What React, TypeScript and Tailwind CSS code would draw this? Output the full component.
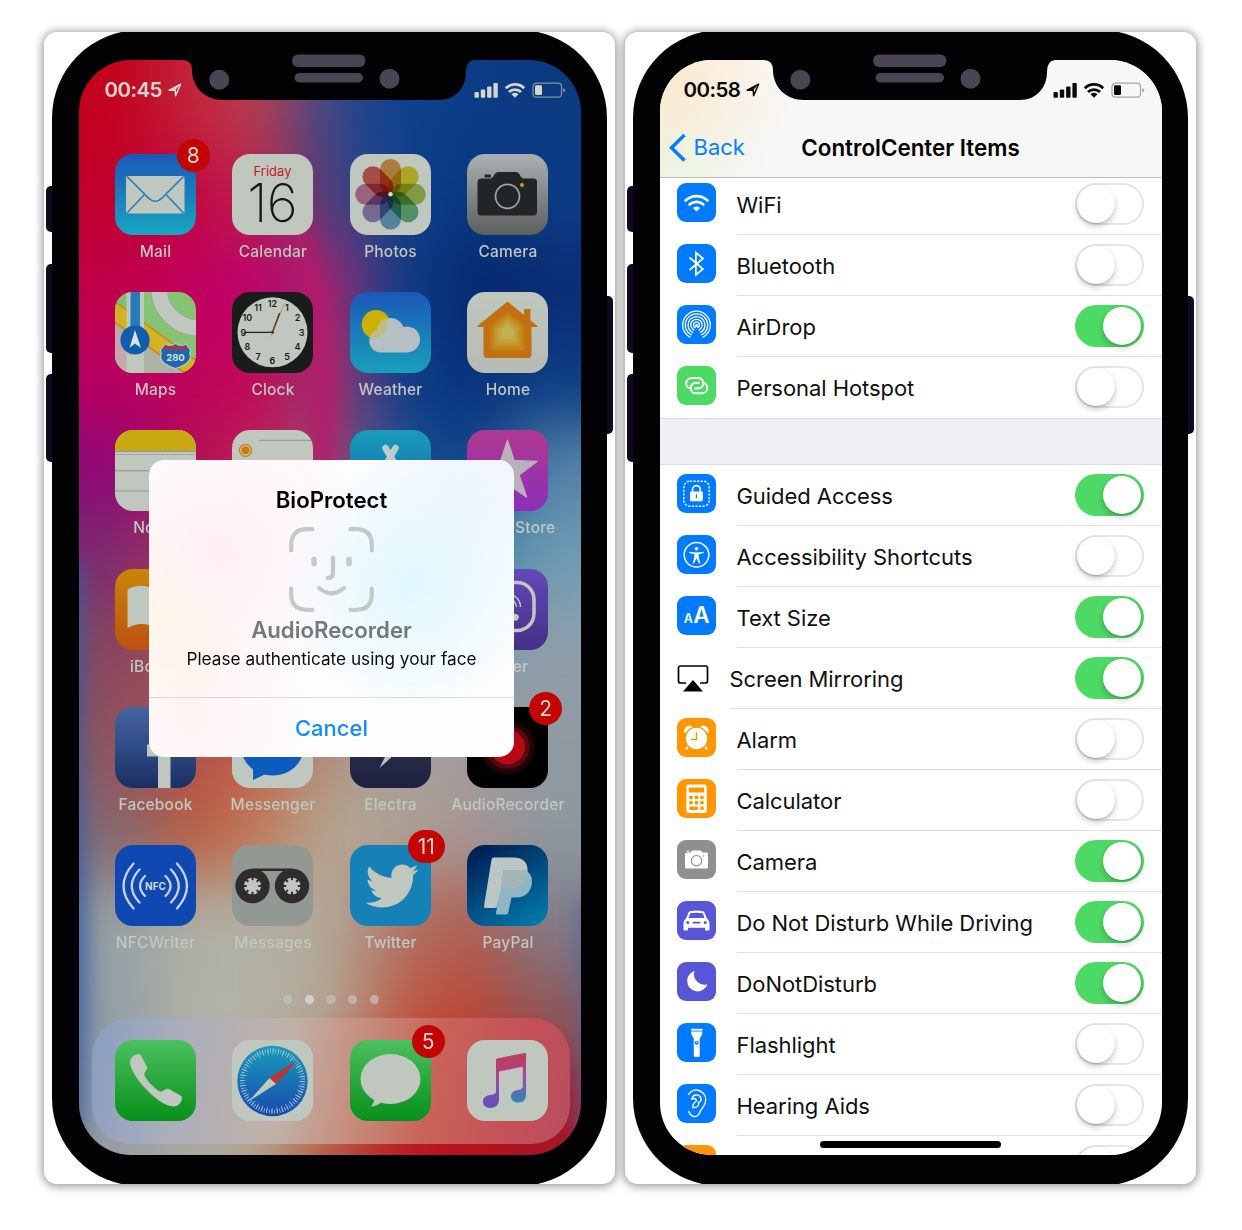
import React from "react";
import { FaTwitter } from "react-icons/fa";

type Child = { children?: React.ReactNode };

const W = "#bfc7be";

/* ---------- wallpaper: a coarse colour mesh, softened ---------- */
const MESH: string[][] = [
  ["#c4001c", "#c2223a", "#ba4050", "#35488a", "#0d418e", "#0b3c86", "#0c3a80"],
  ["#c0002c", "#c00440", "#bd2450", "#45437f", "#0d418e", "#08367c", "#0b3c86"],
  ["#c00048", "#c00060", "#be006c", "#a02a70", "#0b4088", "#06266c", "#0a2c74"],
  ["#b80060", "#c0005a", "#c00a58", "#9c3a72", "#0a408a", "#07307a", "#0b3c82"],
  ["#8c0878", "#b01058", "#c02050", "#8a5078", "#205090", "#0c4088", "#5684aa"],
  ["#7a2c70", "#b03055", "#c05060", "#a06080", "#5080a8", "#4080a8", "#6f9db4"],
  ["#86485f", "#a84858", "#c06050", "#a08080", "#8098a8", "#8098a8", "#929faa"],
  ["#8a5560", "#b54c48", "#c06048", "#b09080", "#a8a09c", "#a09c9c", "#8f99a2"],
  ["#806874", "#b85c40", "#c07a58", "#b4a894", "#aca094", "#a89494", "#8c98a0"],
  ["#94a0a4", "#aeb0a4", "#b2b2a6", "#b2a898", "#ae7466", "#b05c50", "#7e7e8c"],
  ["#8e9ca8", "#b2b2a6", "#b2b2a6", "#b4a694", "#be5a44", "#be4634", "#8a585c"],
  ["#9098a4", "#aaaca8", "#b4ac98", "#b86c50", "#b82024", "#b8101c", "#a01828"],
  ["#9ca0a0", "#aaa89e", "#b4a088", "#b84830", "#b8141c", "#b8101c", "#a81424"],
];

function Wallpaper() {
  return (
    <svg className="absolute inset-0 size-full" viewBox="0 0 502 1095" preserveAspectRatio="none">
      <defs>
        <filter id="soft" x="-20%" y="-20%" width="140%" height="140%" colorInterpolationFilters="sRGB">
          <feGaussianBlur stdDeviation="33" />
        </filter>
        <filter id="soft2" x="-50%" y="-50%" width="200%" height="200%" colorInterpolationFilters="sRGB">
          <feGaussianBlur stdDeviation="10" />
        </filter>
      </defs>
      <g filter="url(#soft)">
        {MESH.map((row, r) =>
          row.map((c, i) => (
            <rect
              key={`${r}-${i}`}
              x={i === 0 ? -120 : i * 71.7}
              y={r === 0 ? -120 : r * 91}
              width={i === 0 || i === 6 ? 193 : 72.7}
              height={r === 0 ? 212 : 92}
              fill={c}
            />
          ))
        )}
      </g>
      <g filter="url(#soft2)">
        <path d="M190 110C225 140 245 200 255 270C262 320 262 370 256 430L225 430C235 330 225 220 190 110Z" fill="#b81868" opacity="0.75" />
        <path d="M-24 500H2C8 600 0 680 6 780C12 880 8 1000 2 1100H-24Z" fill="#3a5c9c" opacity="0.85" />
        <path d="M497 840H520V1080H497Z" fill="#5a6490" opacity="0.7" />
      </g>
    </svg>
  );
}

/* ---------- phone shell ---------- */
function Phone({ children }: Child) {
  return (
    <div className="relative h-[1152px] w-[571px] overflow-visible rounded-[13px] bg-white shadow-[0_1px_8px_2px_rgba(0,0,0,0.38)]">
      <div className="absolute left-[2px] top-[154px] h-[46px] w-3 rounded-[5px] bg-[#120820]" />
      <div className="absolute left-[2px] top-[232px] h-[89px] w-3 rounded-[5px] bg-[#120820]" />
      <div className="absolute left-[2px] top-[342px] h-[88px] w-3 rounded-[5px] bg-[#120820]" />
      <div className="absolute right-[2px] top-[264px] h-[138px] w-3 rounded-[5px] bg-[#120820]" />
      <div className="absolute inset-0 overflow-hidden rounded-[13px]">
        <div className="relative -mt-[2px] ml-[8px] h-[1156px] w-[555px] rounded-[88px] bg-[#020204] pl-[26.5px] pt-[30px]">
          <div className="relative flex h-[1095px] w-[502px] flex-col overflow-hidden rounded-[52px]">{children}</div>
          <svg className="absolute left-[26.5px] top-0 z-20 h-[72px] w-[502px]" viewBox="0 0 502 72">
            <path d="M100 30H104Q113 30.500 113 40C113 57 126 70 144 70H360C376 70 387 58 387 42Q387 30.500 395 30H400V20H100Z" fill="#020204" />
            <rect x="213" y="24.500" width="73.500" height="12.500" rx="6.200" fill="#4b4453" />
            <rect x="215.500" y="43" width="68.500" height="9.500" rx="4.700" fill="#4b4453" />
            <circle cx="140.300" cy="49.700" r="10" fill="#4b4453" />
            <circle cx="310.500" cy="48.700" r="10" fill="#4b4453" />
          </svg>
        </div>
      </div>
    </div>
  );
}

function StatusBar({ time, color, faint }: { time: string; color: string; faint: string }) {
  return (
    <div className="relative flex h-[60px] shrink-0 items-center justify-between" style={{ color }}>
      <div className="flex items-center">
        <span className="text-[20.500px] font-semibold leading-5 tracking-[-0.550px]">{time}</span>
        <svg className="ml-[6px] size-[14px]" viewBox="0 0 14 14">
          <path d="M1.200 7.200L12.600 1.200L7.600 12.600L7.200 7Z" fill="none" stroke={color} strokeWidth="1.500" strokeLinejoin="round" />
          <path d="M1.200 7.200L12.600 1.200L7.200 7Z" fill={color} />
        </svg>
      </div>
      <svg className="h-[17px] w-[92px]" viewBox="0 0 92 17">
        <g fill={color}>
          <rect x="0.500" y="10" width="4.400" height="5.800" rx="1" />
          <rect x="6.800" y="7.500" width="4.400" height="8.300" rx="1" />
          <rect x="13.100" y="4.500" width="4.400" height="11.300" rx="1" />
          <rect x="19.400" y="1" width="4.400" height="14.800" rx="1" />
          <path d="M41 15.800L37.500 12.300A5 5 0 0 1 44.500 12.300Z" />
        </g>
        <g fill="none" stroke={color} strokeWidth="2.800">
          <path d="M31.800 6.200A13.200 13.200 0 0 1 50.200 6.200" />
          <path d="M35 10A8.700 8.700 0 0 1 47 10" />
        </g>
        <rect x="59" y="1.200" width="28.500" height="14" rx="3.500" fill="none" stroke={faint} strokeWidth="1.200" />
        <rect x="61" y="3.300" width="7" height="9.800" rx="1.300" fill={color} />
        <path d="M89.200 6v4.600q2-1 2-2.300t-2-2.300Z" fill={faint} />
      </svg>
    </div>
  );
}

/* ---------- home screen icons (81 x 81 artwork) ---------- */
function Art({ id, from, to, diag, children }: Child & { id: string; from: string; to: string; diag?: boolean }) {
  return (
    <svg className="size-[81px] overflow-hidden rounded-[18px]" viewBox="0 0 81 81">
      <defs>
        <linearGradient id={id} x1={diag ? "0.2" : "0"} y1="0" x2={diag ? "0.8" : "0"} y2="1">
          <stop offset="0" stopColor={from} />
          <stop offset="1" stopColor={to} />
        </linearGradient>
      </defs>
      <rect width="81" height="81" fill={`url(#${id})`} />
      {children}
    </svg>
  );
}

const MailIcon = () => (
  <Art id="mail" from="#1b58b8" to="#18a6c0">
    <rect x="11" y="22" width="58.500" height="37.500" rx="1.500" fill={W} />
    <g fill="none" stroke="#2c80c2" strokeWidth="1.700">
      <path d="M12 22.500L33.500 44.200Q40.300 50.500 47 44.200L68.500 22.500" />
      <path d="M12 59L29.500 40.500M68.500 59L51 40.500" />
    </g>
  </Art>
);

const CalendarIcon = () => (
  <Art id="cal" from={W} to={W}>
    <text x="40.500" y="21.800" textAnchor="middle" fontSize="13" fill="#c21c20">Friday</text>
    <text x="40" y="67.700" textAnchor="middle" fontSize="53" fontWeight="200" letterSpacing="-0.800" fill="#15181a">16</text>
  </Art>
);

const PETALS = ["#dc8726", "#d8cc00", "#98b830", "#4aa868", "#4c90c4", "#8268b0", "#bc6094", "#d23c34"];
const PhotosIcon = () => (
  <Art id="photos" from={W} to={W}>
    <g style={{ isolation: "isolate" }}>
      <circle cx="40.500" cy="40.300" r="36" fill={W} />
      {PETALS.map((c, i) => (
        <rect key={c} x="30" y="5" width="21" height="35" rx="10.500" fill={c} opacity="0.8" transform={`rotate(${i * 45} 40.500 40.300)`} className="mix-blend-multiply" />
      ))}
      <circle cx="40.500" cy="40.300" r="2.200" fill="#d8dccc" />
    </g>
  </Art>
);

const CameraIcon = () => (
  <Art id="cam" from="#abb0b3" to="#5c5f5c">
    <path d="M14.500 24.500H24Q26 24 27.500 20.500Q28.500 18 31 18H49Q51.500 18 52.500 20.500Q54 24 56 24.500H66.500Q70 24.500 70 28V58Q70 61.500 66.500 61.500H14.500Q10.500 61.500 10.500 58V28Q10.500 24.500 14.500 24.500Z" fill="#222527" />
    <rect x="17.500" y="20.600" width="6.500" height="2.800" rx="1.200" fill="#222527" />
    <circle cx="40.500" cy="42.300" r="12" fill="#222527" stroke="#9ea3a3" strokeWidth="1.700" />
    <circle cx="55" cy="31" r="1.900" fill="#d0a810" />
  </Art>
);

const MapsIcon = () => (
  <Art id="maps" from="#86c474" to="#86c474">
    <path d="M0 0H13V81H0Z" fill="#a8b098" />
    <path d="M0 0H12V22L0 12Z" fill="#86bc74" />
    <path d="M0 34L12 42V81H0Z" fill="#c6a8ac" />
    <path d="M29 47L72 81H29Z" fill="#adb2a6" />
    <circle cx="84" cy="-4" r="40" fill="none" stroke="#98a890" strokeWidth="17.500" />
    <circle cx="84" cy="-4" r="40" fill="none" stroke={W} strokeWidth="15.500" />
    <path d="M-4 17L84 81" stroke="#c08420" strokeWidth="18" />
    <path d="M-4 17L84 81" stroke="#d2b422" strokeWidth="15.500" />
    <rect x="11.500" y="0" width="17.500" height="81" fill={W} />
    <rect x="15.500" y="0" width="9.500" height="50" fill="#267cb8" />
    <circle cx="20" cy="48" r="14.600" fill="#0f5dae" />
    <path d="M20 38L26 56L20 51.500L14.500 56Z" fill="#dbe2dc" />
    <path d="M50 52Q55 55 60.500 51.500Q66 55 71 52L75.500 58Q74 61 75.500 65Q75 72 60.500 76.500Q46 72 45.500 65Q47 61 45.500 58Z" fill="#1c66b2" stroke="#bfc7be" strokeWidth="1.200" />
    <path d="M51 53.500Q56 56 60.500 53.500Q65 56 70 53.500L73 57.500H48Z" fill="#c03038" />
    <text x="60.500" y="69" textAnchor="middle" fontSize="9.500" fontWeight="700" fill="#dbe2dc">280</text>
  </Art>
);

const ClockIcon = () => (
  <Art id="clock" from="#1a1c1c" to="#1a1c1c">
    <circle cx="40.500" cy="40.300" r="35" fill={W} />
    {[1, 2, 3, 4, 5, 6, 7, 8, 9, 10, 11, 12].map((n) => (
      <text
        key={n}
        x={40.5 + 29 * Math.sin((n * Math.PI) / 6)}
        y={43.6 - 28.5 * Math.cos((n * Math.PI) / 6)}
        textAnchor="middle"
        fontSize="9"
        fontWeight="600"
        fill="#1a1c1c"
      >
        {n}
      </text>
    ))}
    <path d="M40.500 40.300H12.500" stroke="#202222" strokeWidth="1.300" />
    <path d="M40.500 40.300L47.800 21" stroke="#202222" strokeWidth="1.600" />
    <path d="M39 44.500L52.500 11" stroke="#c08a40" strokeWidth="0.700" />
    <circle cx="40.500" cy="40.300" r="1.600" fill="#5a4020" />
  </Art>
);

const WeatherIcon = () => (
  <Art id="weather" from="#1b58b8" to="#17a0ba">
    <circle cx="26" cy="32.300" r="14.300" fill="#cbb202" />
    <path d="M30 60.500A11.300 11.300 0 0 1 27 38.500A13.700 13.700 0 0 1 53.500 35A13 13 0 1 1 57 60.500Z" fill="#b4c0c4" />
    <path d="M27 38.500A13.700 13.700 0 0 1 36.500 26A14.300 14.300 0 0 1 24.500 46.300Q21 46 19.500 47Q20.500 40 27 38.500Z" fill="#bfbc88" />
  </Art>
);

const HOUSE = [
  ["#c27412", 1],
  ["#c48418", 0.86],
  ["#c59226", 0.7],
  ["#c4a038", 0.54],
  ["#c0b052", 0.37],
] as const;
const HomeIcon = () => (
  <Art id="home" from={W} to="#b8bab4">
    <path d="M40.500 9.500L57 23V18Q57 17 58 17H62.500Q63.500 17 63.500 18V28.500L70.500 34Q71 35 70 35H64.500V62Q64.500 66 61 66H20Q16.500 66 16.500 62V35H11Q10 35 10.500 34Z" fill="#c26e12" />
    {HOUSE.map(([c, s]) => (
      <path key={c} d="M0 -23L19 -8V18Q19 20 17 20H-17Q-19 20 -19 18V-8Z" fill={c} transform={`translate(40.500 ${41 - (1 - s) * 1}) scale(${s})`} />
    ))}
  </Art>
);

const NotesIcon = () => (
  <Art id="notes" from={W} to={W}>
    <rect width="81" height="20.500" fill="#c8aa10" />
    <rect y="20.500" width="81" height="1.500" fill="#a09868" />
    <path d="M0 24.500H81" stroke="#8a8f88" strokeWidth="1" strokeDasharray="1.300 1.300" />
    <path d="M0 40.800H81M0 61H81" stroke="#8f958f" strokeWidth="1" />
  </Art>
);

const RemindersIcon = () => (
  <Art id="rem" from={W} to={W}>
    <path d="M27 10.300H81M27 31H81" stroke="#8f958f" strokeWidth="1" />
    <circle cx="13.500" cy="20.300" r="6" fill="none" stroke="#c88418" strokeWidth="1.300" />
    <circle cx="13.500" cy="20.300" r="4" fill="#d07c00" />
  </Art>
);

const AppStoreIcon = () => (
  <Art id="store" from="#189cb8" to="#1860b8">
    <path d="M35.500 18L46 36M45.500 18L30 45" stroke="#b8ccd0" strokeWidth="6.500" strokeLinecap="round" />
  </Art>
);

const ITunesIcon = () => (
  <Art id="itunes" from="#b03890" to="#8a30b8">
    <path d="M40.500 10.500L47 30.500L70 31.500L52 45L59.500 67L40.500 54L21.500 67L29 45L11 31.500L34 30.500Z" fill="#b8b0ba" stroke="#b8b0ba" strokeWidth="1.500" strokeLinejoin="round" />
  </Art>
);

const IBooksIcon = () => (
  <Art id="ibooks" from="#c88608" to="#bc5010">
    <path d="M12.500 59V20.500Q26 13 40.500 21Q55 13 68.500 20.500V59Q54 51 40.500 59Q27 51 12.500 59Z" fill={W} />
  </Art>
);

const ViberIcon = () => (
  <Art id="viber" from="#6448b8" to="#443088">
    <rect x="14" y="13.500" width="53" height="48" rx="17" fill="none" stroke={W} strokeWidth="3.500" />
    <g fill="none" stroke={W} strokeWidth="1.500">
      <path d="M41 25A13 13 0 0 1 53.500 38M41 29.500A9 9 0 0 1 49.500 38M41 34A4.500 4.500 0 0 1 45.500 38" />
    </g>
    <path d="M44 48Q48 42 52 47L51 51Q47 53 44 50Z" fill={W} />
  </Art>
);

const FacebookIcon = () => (
  <Art id="fb" from="#4464a4" to="#1a3064">
    <path d="M43 81V49.500H32V37.500H43V30Q43 16 57 16H66V27H60Q55.500 27 55.500 32V37.500H66L64.500 49.500H55.500V81Z" fill={W} />
  </Art>
);

const MessengerIcon = () => (
  <Art id="msgr" from={W} to={W}>
    <ellipse cx="40.500" cy="41" rx="31" ry="27.500" fill="#0c5cc0" />
    <path d="M21 58V73L38 65Z" fill="#0c5cc0" />
  </Art>
);

const ElectraIcon = () => (
  <Art id="electra" from="#343c54" to="#1e2040">
    <path d="M50 18L26 46H37L29.500 61L55 38H43Z" fill={W} />
  </Art>
);

const RecorderIcon = () => (
  <Art id="recorder" from="#000000" to="#000000">
    <circle cx="40.500" cy="40" r="27" fill="#240206" />
    <circle cx="40.500" cy="40" r="22" fill="#540a10" />
    <circle cx="40.500" cy="40" r="17.500" fill="#b80814" />
  </Art>
);

const NfcIcon = () => (
  <Art id="nfc" from="#1048b2" to="#1048b2">
    <g fill="none" stroke="#c8d0d8" strokeWidth="2.300" strokeLinecap="round">
      <path d="M18.500 18.500Q-1.500 41 18.500 63.500M24.500 24.500Q9 41 24.500 57.500M30 31Q20 41 30 51" />
      <path d="M62 18.500Q82 41 62 63.500M56 24.500Q71.500 41 56 57.500M50.500 31Q60.500 41 50.500 51" />
    </g>
    <text x="40.500" y="44.500" textAnchor="middle" fontSize="10" fontWeight="700" fill="#d0d8dc">NFC</text>
  </Art>
);

const TEETH = [0, 45, 90, 135, 180, 225, 270, 315];
const TapeIcon = () => (
  <Art id="tape" from="#929892" to="#929892">
    <path d="M20.500 24.700H60" stroke="#2e2c2e" strokeWidth="2.400" />
    {[20.5, 60].map((x) => (
      <g key={x}>
        <circle cx={x} cy="41" r="17.200" fill="#2e2c2e" />
        <circle cx={x} cy="41" r="8.600" fill={W} />
        {TEETH.map((a) => (
          <rect key={a} x={x - 1} y="32" width="2" height="3.200" fill="#2e2c2e" transform={`rotate(${a} ${x} 41)`} />
        ))}
      </g>
    ))}
  </Art>
);

const TwitterIcon = () => (
  <Art id="tw" from="#1581b6" to="#1581b6">
    <FaTwitter x="15.500" y="14.500" size={53} color={W} />
  </Art>
);

const PayPalIcon = () => (
  <Art id="pp" from="#001e56" to="#0078a8" diag>
    <path d="M36 25H56Q66 27 65 38Q63 52 49 52.500H44.500L41 68.500Q40.500 69.500 39 69.500H30Q28.500 69.500 29 68Z" fill="#8fb6c6" />
    <path d="M26.500 12.500H46Q61 12.500 60.500 26Q59 43 42 43H34L30 61.500Q29.500 63 28 63H18.500Q16.500 63 17 61L24.500 14.500Q25 12.500 26.500 12.500Z" fill="#bcc6c4" />
    <path d="M36 25H60.500Q59.500 43 42 43H33.500Z" fill="#a3b5b8" />
  </Art>
);

const PhoneIcon = () => (
  <Art id="phone" from="#4cc060" to="#06901a">
    <path d="M15 22C15 17 20 14.500 23.500 14Q25 14 26 15.500L32 27Q32.500 28.500 31.500 29.500L29.500 33Q29 34.500 29.500 35.500C33 42 39 48 44.500 51.300Q46 52 47.500 51L51 49Q52.500 48.300 54 49L65.500 55.500Q67.500 56.500 67 58.500C66 63 63 66.500 58.500 66.500C50 66.500 38 57 29 47C21 38 15 28 15 22Z" fill={W} />
  </Art>
);

const SafariIcon = () => (
  <div className="flex size-[81px] overflow-hidden rounded-[18px] bg-[#bfc7be]">
    <svg className="size-[81px]" viewBox="0 0 81 81">
      <defs>
        <linearGradient id="safari" x1="0" y1="0" x2="0" y2="1">
          <stop offset="0" stopColor="#189cb8" />
          <stop offset="1" stopColor="#1848b0" />
        </linearGradient>
      </defs>
      <circle cx="40.500" cy="41" r="35.200" fill="url(#safari)" />
      <circle cx="40.500" cy="41" r="30.500" fill="none" stroke="#a8c4cc" strokeWidth="4" strokeDasharray="0.800 1.862" />
      <circle cx="40.500" cy="41" r="29.500" fill="none" stroke="#a8c4cc" strokeWidth="6" strokeDasharray="0.800 4.350" />
      <path d="M66 20L44 44L37.500 38Z" fill="#c03430" />
      <path d="M16.500 61.500L44 44L37.500 38Z" fill={W} />
    </svg>
  </div>
);

const MessagesIcon = () => (
  <Art id="sms" from="#4cc060" to="#06901a">
    <ellipse cx="40.500" cy="39" rx="30" ry="25" fill={W} />
    <path d="M24.500 56Q25 63 20.500 66.500Q28 66 33 61Z" fill={W} />
  </Art>
);

const MusicIcon = () => (
  <div className="size-[81px] rounded-[18px] bg-[#bfc7be]">
    <svg className="size-[81px]" viewBox="0 0 81 81">
      <defs>
        <linearGradient id="note" x1="0.300" y1="0" x2="0.500" y2="1">
          <stop offset="0" stopColor="#c4384c" />
          <stop offset="0.300" stopColor="#b44078" />
          <stop offset="0.650" stopColor="#7850b4" />
          <stop offset="1" stopColor="#5a50c0" />
        </linearGradient>
        <linearGradient id="note2" x1="0" y1="0" x2="0" y2="1">
          <stop offset="0" stopColor="#c4384c" />
          <stop offset="0.400" stopColor="#a04c9c" />
          <stop offset="1" stopColor="#2c84bc" />
        </linearGradient>
      </defs>
      <path d="M29 20Q29 18.800 30.200 18.500L57.500 13Q59 12.700 59 14V26L32 31.500V60C32 65 28 68 23 68C18.500 68 16 65 16 61.500C16 57.500 19 55.500 23 55L26 54.500Q29 54 29 51Z" fill="url(#note)" />
      <path d="M55.800 14H59V55C59 60 55.500 62.500 51 62.500C47 62.500 44 60 44 56.500C44 52.500 47 50.500 51 50L53.500 49.500Q55.800 49 55.800 46Z" fill="url(#note2)" />
    </svg>
  </div>
);

function Badge({ n }: { n: string }) {
  return (
    <span
      className={`absolute right-[-14px] top-[-15px] flex h-[33px] items-center justify-center rounded-full bg-[#c40404] text-[21px] leading-none text-[#d8d8cc] ${
        n.length > 1 ? "w-[37px]" : "w-[33px]"
      }`}
    >
      {n}
    </span>
  );
}

type App = { name?: string; icon?: React.ReactNode; badge?: string };
const APPS: App[] = [
  { name: "Mail", icon: <MailIcon />, badge: "8" },
  { name: "Calendar", icon: <CalendarIcon /> },
  { name: "Photos", icon: <PhotosIcon /> },
  { name: "Camera", icon: <CameraIcon /> },
  { name: "Maps", icon: <MapsIcon /> },
  { name: "Clock", icon: <ClockIcon /> },
  { name: "Weather", icon: <WeatherIcon /> },
  { name: "Home", icon: <HomeIcon /> },
  { name: "Notes", icon: <NotesIcon /> },
  { icon: <RemindersIcon /> },
  { icon: <AppStoreIcon /> },
  { name: "iTunes Store", icon: <ITunesIcon /> },
  { name: "iBooks", icon: <IBooksIcon /> },
  {},
  {},
  { name: "Viber", icon: <ViberIcon /> },
  { name: "Facebook", icon: <FacebookIcon /> },
  { name: "Messenger", icon: <MessengerIcon /> },
  { name: "Electra", icon: <ElectraIcon /> },
  { name: "AudioRecorder", icon: <RecorderIcon />, badge: "2" },
  { name: "NFCWriter", icon: <NfcIcon /> },
  { name: "Messages", icon: <TapeIcon /> },
  { name: "Twitter", icon: <TwitterIcon />, badge: "11" },
  { name: "PayPal", icon: <PayPalIcon /> },
];
const DOCK: App[] = [
  { icon: <PhoneIcon /> },
  { icon: <SafariIcon /> },
  { icon: <MessagesIcon />, badge: "5" },
  { icon: <MusicIcon /> },
];

function AppCell({ app }: { app: App }) {
  return (
    <div className="flex flex-col items-center">
      <div className="relative size-[81px]">
        {app.icon}
        {app.badge && <Badge n={app.badge} />}
      </div>
      {app.name && (
        <span className="mt-[7px] whitespace-nowrap pl-[0.500px] text-[15.500px] font-medium leading-5 tracking-[0.200px] text-[#c2c8c0]">{app.name}</span>
      )}
    </div>
  );
}

function BioDialog() {
  return (
    <div className="absolute left-[70.500px] top-[399.500px] flex h-[297.500px] w-[365px] flex-col items-center rounded-[15px] bg-[#fdfdfd] bg-[radial-gradient(circle_at_72%_42%,rgba(222,247,255,0.95),transparent_42%),radial-gradient(circle_at_90%_6%,rgba(238,244,255,0.9),transparent_30%),radial-gradient(circle_at_20%_30%,rgba(255,238,246,0.9),transparent_42%),radial-gradient(circle_at_4%_50%,rgba(255,246,222,0.9),transparent_28%),radial-gradient(circle_at_12%_86%,rgba(255,242,242,0.9),transparent_30%)]">
      <h2 className="mt-[26px] text-[22.200px] font-semibold leading-7 text-black">BioProtect</h2>
      <svg className="mt-[13px] h-[85px] w-[85px]" viewBox="0 0 85 85" fill="none" stroke="#c3c9c7" strokeWidth="4.200" strokeLinecap="round">
        <path d="M2.200 23.500V18Q2.200 2.200 18 2.200H23.500M61.500 2.200H67Q82.800 2.200 82.800 18V23.500M82.800 61.500V67Q82.800 82.800 67 82.800H61.500M23.500 82.800H18Q2.200 82.800 2.200 67V61.500" />
        <path d="M25 32.500V36.500M60 32.500V36.500" strokeWidth="5.600" />
        <path d="M44 30.500V45.500Q44 51 38.500 51" />
        <path d="M30 61Q42.500 71.500 55 61" />
      </svg>
      <h3 className="mt-[4px] text-[22.200px] font-semibold leading-7 text-[#747a79]">AudioRecorder</h3>
      <p className="mt-[3px] whitespace-nowrap text-[17.200px] leading-6 text-[#0c0c0c]">Please authenticate using your face</p>
      <button className="mt-auto h-[60px] w-full border-t border-[#dfd8d8] pt-[2px] text-[22px] font-medium text-[#128cf4]">Cancel</button>
    </div>
  );
}

function HomeScreen() {
  return (
    <>
      <Wallpaper />
      <div className="pl-[26px] pr-[15px]">
        <StatusBar time="00:45" color="#d3d6cd" faint="#8094ac" />
      </div>
      <div className="relative mt-[33.500px] grid auto-rows-[138.400px] grid-cols-[repeat(4,117.500px)] pl-[18px]">
        {APPS.map((a, i) => (
          <AppCell key={i} app={a} />
        ))}
      </div>
      <div className="relative mt-[11px] flex justify-center gap-[12.400px] pl-[3px]">
        <i className="size-[9.200px] rounded-full bg-[#b9bdb5]" />
        <i className="size-[9.200px] rounded-full bg-[#cdd4ce]" />
        <i className="size-[9.200px] rounded-full bg-[#bcb8ac]" />
        <i className="size-[9.200px] rounded-full bg-[#bcb4a8]" />
        <i className="size-[9.200px] rounded-full bg-[#c4aca0]" />
      </div>
      <div className="relative ml-[13px] mr-[10.500px] mt-[13.500px] grid h-[126px] grid-cols-[repeat(4,117.500px)] rounded-[38px] bg-[linear-gradient(100deg,#889dc0_0%,#a9aebb_18%,#c0b2a8_40%,#c69080_54%,#c86458_70%,#c45058_88%,#b84e60_100%)] pl-[5px] pt-[22.500px]">
        {DOCK.map((a, i) => (
          <AppCell key={i} app={a} />
        ))}
      </div>
      <BioDialog />
    </>
  );
}

/* ---------- settings icons (39 x 39 artwork) ---------- */
const WifiGlyph = () => (
  <>
    <g fill="none" stroke="#fff" strokeWidth="2.600">
      <path d="M8.500 17.500A16 16 0 0 1 30.500 17.500M12.500 21.500A10.500 10.500 0 0 1 26.500 21.500" strokeLinecap="round" />
    </g>
    <path d="M19.500 28.500L15.800 25A5.300 5.300 0 0 1 23.200 25Z" fill="#fff" />
  </>
);
const BluetoothGlyph = () => <path d="M12.500 13.500L26 25L18.900 31V8.500L26 14.500L12.500 26" fill="none" stroke="#fff" strokeWidth="1.700" />;
const AirDropGlyph = () => (
  <>
    <g fill="none" stroke="#fff" strokeWidth="1.250">
      {[13.8, 11.2, 8.5, 5.7, 2.9].map((r) => (
        <circle key={r} cx="19.500" cy="20" r={r} />
      ))}
    </g>
    <path d="M19.500 21L29 39H10Z" fill="#007aff" />
    <circle cx="19.500" cy="20.500" r="1.500" fill="#fff" />
  </>
);
const HotspotGlyph = () => (
  <g fill="none" stroke="#fff" strokeWidth="1.900" strokeLinecap="round">
    <path d="M13.500 22.500A5.300 5.300 0 0 1 14.500 12H21.500A5.300 5.300 0 0 1 22.500 22.300L18 22.500" />
    <path d="M26 16.800A5.300 5.300 0 0 1 25.500 27.300H18.500A5.300 5.300 0 0 1 17.500 17L22 16.800" />
  </g>
);
const GuidedGlyph = () => (
  <>
    <rect x="6.800" y="7.200" width="25.400" height="25" rx="6" fill="none" stroke="#fff" strokeWidth="1.400" strokeDasharray="2.200 1.400" />
    <rect x="13" y="17.500" width="12.800" height="9.800" rx="1" fill="#fff" />
    <path d="M15.500 18V15.500A3.900 3.900 0 0 1 23.300 15.500V18" fill="none" stroke="#fff" strokeWidth="1.600" />
    <path d="M19.400 20.300V24" stroke="#007aff" strokeWidth="1.200" />
  </>
);
const AccessGlyph = () => (
  <>
    <circle cx="19.500" cy="19.800" r="12.300" fill="none" stroke="#fff" strokeWidth="1.500" />
    <circle cx="19.500" cy="13.800" r="1.800" fill="#fff" />
    <path d="M12.300 16.800Q19.500 18 26.700 16.800V18L21.700 19.200V22L23.300 28.500H21.900L19.500 23.300L17.100 28.500H15.700L17.300 22V19.200L12.300 18Z" fill="#fff" />
  </>
);
const TextSizeGlyph = () => (
  <g fill="#fff" fontWeight="600">
    <text x="6.800" y="27" fontSize="12.500">A</text>
    <text x="16.200" y="27" fontSize="22.500">A</text>
  </g>
);
const MirrorGlyph = () => (
  <>
    <path d="M9 26H3.500Q1.500 26 1.500 24V11Q1.500 9 3.500 9H28.500Q30.500 9 30.500 11V24Q30.500 26 28.500 26H23" fill="none" stroke="#000" strokeWidth="1.700" />
    <path d="M16 23L26 34.500H6Z" fill="#000" />
  </>
);
const AlarmGlyph = () => (
  <>
    <g stroke="#fff" strokeWidth="2" strokeLinecap="round">
      <path d="M11 28.500L9.300 31M28 28.500L29.700 31" />
    </g>
    <path d="M7.800 14.500A5 5 0 0 1 15.500 9ZM31.200 14.500A5 5 0 0 0 23.500 9Z" fill="#fff" stroke="#fff" strokeWidth="1" />
    <circle cx="19.500" cy="20.500" r="11.300" fill="#fff" stroke="#ff9500" strokeWidth="1.200" />
    <path d="M19.500 14V21.500H14" fill="none" stroke="#ff9500" strokeWidth="1.300" />
  </>
);
const CalcGlyph = () => (
  <>
    <rect x="9.300" y="5.500" width="20.500" height="28.500" rx="2.500" fill="#fff" />
    <g fill="#ff9500">
      <rect x="12" y="8.500" width="15" height="5" />
      {[18.4, 23.7].map((y) => [14, 19.5, 25].map((x) => <circle key={`${x}${y}`} cx={x} cy={y} r="1.900" />))}
      <rect x="12.100" y="27.400" width="9.300" height="3.600" rx="1.800" />
      <circle cx="25" cy="29.200" r="1.900" />
    </g>
  </>
);
const CameraGlyph = () => (
  <>
    <path d="M10 12.500H13.500L15 10.500H24L25.500 12.500H29.500Q31 12.500 31 14V27Q31 28.500 29.500 28.500H9.500Q8 28.500 8 27V14Q8 12.500 10 12.500Z" fill="#fff" />
    <circle cx="19.500" cy="20.700" r="5.200" fill="none" stroke="#8e8e93" strokeWidth="1.100" />
    <circle cx="26.500" cy="16" r="0.700" fill="#8e8e93" />
    <rect x="9.500" y="10.700" width="3" height="1" fill="#fff" />
  </>
);
const CarGlyph = () => (
  <>
    <path d="M11.500 11.500Q12 10 14 9.900Q19.500 9.300 25 9.900Q27 10 27.500 11.500L29.800 17.300Q32.500 19 32.500 22V28.500Q32.500 29.500 31.500 29.500H29Q28 29.500 28 28.500V26.800H11V28.500Q11 29.500 10 29.500H7.500Q6.500 29.500 6.500 28.500V22Q6.500 19 9.200 17.300Z" fill="#fff" />
    <path d="M13.200 12.300Q19.500 11 25.800 12.300L27.500 17H11.500Z" fill="#5856d6" />
    <circle cx="10.800" cy="21.500" r="1.500" fill="#5856d6" />
    <circle cx="28.200" cy="21.500" r="1.500" fill="#5856d6" />
    <rect x="15.500" y="20.700" width="8" height="1.800" rx="0.900" fill="#5856d6" />
  </>
);
const MoonGlyph = () => <path d="M17.500 9C13 10.500 10.200 14.500 10.200 19A10.400 10.400 0 0 0 30.500 22.200A10.500 10.500 0 0 1 17.500 9Z" fill="#fff" />;
const TorchGlyph = () => (
  <>
    <rect x="14" y="5.800" width="11.500" height="1.800" fill="#fff" />
    <path d="M14 8.500H25.500Q25.500 12.500 22.700 15.500V32.500Q22.700 34 21.500 34H18Q16.800 34 16.800 32.500V15.500Q14 12.500 14 8.500Z" fill="#fff" />
    <circle cx="19.700" cy="19.700" r="2" fill="#007aff" />
    <circle cx="19.700" cy="19.200" r="0.700" fill="#fff" />
  </>
);
const EarGlyph = () => (
  <g fill="none" stroke="#fff" strokeWidth="1.400" strokeLinecap="round">
    <path d="M11.500 10.500C14 6 19 5 23 7C28 9.500 29.800 14.500 28 19.500C26 24.500 24 25 22.500 29C21.500 32 18.500 33.500 15.500 32C13 30.500 12 28.500 12 27.500" />
    <path d="M15 15C15.500 10.500 21 9.500 23.500 13C25 15.500 24 17.500 21.500 18.500C22.500 21 20.500 23.500 17.500 23.500" />
    <path d="M15 15Q19 13.500 19.500 17Q15 20 16 24" />
  </g>
);

type Row = { label: string; on: boolean; glyph: React.ReactNode; tint: string; indent?: boolean };
const BLUE = "bg-[#007aff]";
const SECTION_A: Row[] = [
  { label: "WiFi", on: false, glyph: <WifiGlyph />, tint: BLUE },
  { label: "Bluetooth", on: false, glyph: <BluetoothGlyph />, tint: BLUE },
  { label: "AirDrop", on: true, glyph: <AirDropGlyph />, tint: BLUE },
  { label: "Personal Hotspot", on: false, glyph: <HotspotGlyph />, tint: "bg-[#4cd964]" },
];
const SECTION_B: Row[] = [
  { label: "Guided Access", on: true, glyph: <GuidedGlyph />, tint: BLUE },
  { label: "Accessibility Shortcuts", on: false, glyph: <AccessGlyph />, tint: BLUE },
  { label: "Text Size", on: true, glyph: <TextSizeGlyph />, tint: BLUE },
  { label: "Screen Mirroring", on: true, glyph: <MirrorGlyph />, tint: "bg-transparent", indent: true },
  { label: "Alarm", on: false, glyph: <AlarmGlyph />, tint: "bg-[#ff9500]" },
  { label: "Calculator", on: false, glyph: <CalcGlyph />, tint: "bg-[#ff9500]" },
  { label: "Camera", on: true, glyph: <CameraGlyph />, tint: "bg-[#8e8e93]" },
  { label: "Do Not Disturb While Driving", on: true, glyph: <CarGlyph />, tint: "bg-[#5856d6]" },
  { label: "DoNotDisturb", on: true, glyph: <MoonGlyph />, tint: "bg-[#5856d6]" },
  { label: "Flashlight", on: false, glyph: <TorchGlyph />, tint: BLUE },
  { label: "Hearing Aids", on: false, glyph: <EarGlyph />, tint: BLUE },
  { label: "", on: false, glyph: null, tint: "bg-[#ff9500]" },
];

function Toggle({ on }: { on: boolean }) {
  return (
    <div className={`flex h-[42px] w-[69px] items-center rounded-full ${on ? "justify-end bg-[#4cd964] pr-[2.500px]" : "border-2 border-[#e5e5e5] bg-white"}`}>
      <i className="size-[38px] shrink-0 rounded-full bg-white shadow-[0_3px_6px_rgba(0,0,0,0.22),0_1px_1px_rgba(0,0,0,0.12)]" />
    </div>
  );
}

function SettingsRow({ row, last }: { row: Row; last: boolean }) {
  return (
    <div className="flex h-[61px] shrink-0 pl-[17.500px]">
      <div className={`mt-[9.500px] size-[39px] shrink-0 rounded-[9px] ${row.tint}`}>
        <svg className="size-full" viewBox="0 0 39 39">
          {row.glyph}
        </svg>
      </div>
      <div className={`flex h-[61px] grow items-center justify-between pr-[18px] ${row.indent ? "ml-[13.500px]" : "ml-[20.500px]"} ${last ? "" : "border-b border-[#e0e0e2]"}`}>
        <span className="whitespace-nowrap pt-[3px] text-[22px] tracking-[-0.060px] text-[#101010]">{row.label}</span>
        <Toggle on={row.on} />
      </div>
    </div>
  );
}

function SettingsScreen() {
  return (
    <div className="flex h-full flex-col bg-white">
      <header className="z-10 h-[118px] shrink-0 border-b border-[#bcbcbe] bg-[#f7f7f7] bg-[radial-gradient(circle_at_3%_16%,rgba(255,232,206,0.9),transparent_24%),radial-gradient(circle_at_0%_78%,rgba(226,248,226,0.9),transparent_22%)]">
        <div className="pl-[24px] pr-[17px]">
          <StatusBar time="00:58" color="#0a0a0a" faint="#a4a4a4" />
        </div>
        <div className="grid h-[55px] grid-cols-[1fr_auto_1fr] items-center">
          <div className="flex items-center pl-[9px] text-[#0a7cff]">
            <svg className="h-[30px] w-[18px]" viewBox="0 0 18 30">
              <path d="M15.500 2L2.500 14.700L15.500 27.500" fill="none" stroke="currentColor" strokeWidth="3.600" />
            </svg>
            <span className="ml-[7px] text-[22px]">Back</span>
          </div>
          <h1 className="text-[22.400px] font-semibold text-black">ControlCenter Items</h1>
          <span />
        </div>
      </header>
      <div className="-mt-[4.500px] flex min-h-0 grow flex-col overflow-hidden">
        {SECTION_A.map((r, i) => (
          <SettingsRow key={r.label} row={r} last={i === 3} />
        ))}
        <div className="h-[47px] shrink-0 border-y border-[#dcdce0] bg-[#efeff4]" />
        {SECTION_B.map((r) => (
          <SettingsRow key={r.label} row={r} last={false} />
        ))}
      </div>
      <div className="absolute bottom-[7.500px] left-[160.500px] h-[7px] w-[181px] rounded-full bg-black" />
    </div>
  );
}

export default function App() {
  return (
    <main className="flex h-[1230px] w-[1242px] gap-[10px] overflow-hidden bg-white pl-[44px] pt-[32px] font-['Inter',sans-serif]">
      <Phone>
        <HomeScreen />
      </Phone>
      <Phone>
        <SettingsScreen />
      </Phone>
    </main>
  );
}
